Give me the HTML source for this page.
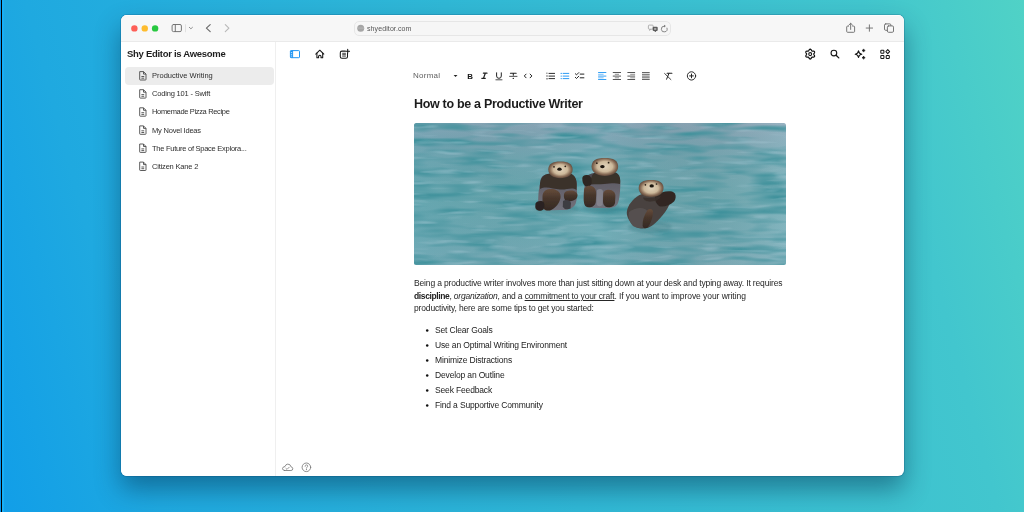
<!DOCTYPE html>
<html><head><meta charset="utf-8">
<style>
*{box-sizing:border-box;margin:0;padding:0}
html,body{width:1024px;height:512px;overflow:hidden}
body{position:relative;font-family:"Liberation Sans",sans-serif;background:linear-gradient(75deg,#119ee8 0%,#1fa9e0 14%,#30b8d6 50%,#42c6ce 86%,#50d2c6 100%)}
.a{position:absolute}
.t{position:absolute;white-space:nowrap;line-height:1;will-change:transform}
#edge0{left:0;top:0;width:1px;height:512px;background:#0896f0}
#edge1{left:1px;top:0;width:1px;height:512px;background:#000}
#edge2{left:2px;top:0;width:2px;height:512px;background:#1aaef5}
#win{left:121px;top:15px;width:783px;height:461px;border-radius:6px;background:#fff;overflow:hidden;
 box-shadow:0 0 0 1px rgba(0,50,100,.18),0 13px 26px rgba(0,40,70,.45)}
#tb{left:0;top:0;width:783px;height:27px;background:#f7f7f7;border-bottom:1px solid #eaeaea;box-shadow:inset 0 1px 0 #fdfdfd}
#side{left:0;top:27px;width:155px;height:434px;border-right:1px solid #efefef;background:#fff}
.si{font-size:7.5px;color:#2e2e2e}
.li{font-size:8.5px;letter-spacing:-0.155px;color:#222}
#svg{position:absolute;left:0;top:0;width:1024px;height:512px}
</style></head>
<body>
<div class="a" id="edge0"></div><div class="a" id="edge1"></div><div class="a" id="edge2"></div>
<div class="a" id="win">
  <div class="a" id="tb">
    <div class="a" style="left:233px;top:6px;width:317px;height:14.5px;border:1px solid #e6e6e6;border-radius:5px;background:#f6f6f6"></div>
  </div>
  <div class="a" id="side">
    <div class="a" style="left:4px;top:25px;width:148.5px;height:17.5px;border-radius:4px;background:#ececec"></div>
  </div>
</div>

<!-- texts -->
<div class="t" style="left:366.5px;top:24.7px;font-size:7px;letter-spacing:0.1px;color:#555">shyeditor.com</div>
<div class="t" style="left:127px;top:49px;font-size:9.5px;font-weight:bold;letter-spacing:-0.29px;color:#1e1e1e">Shy Editor is Awesome</div>
<div class="t si" style="left:152px;top:72.2px">Productive Writing</div>
<div class="t si" style="left:152px;top:90.3px;letter-spacing:-0.18px">Coding 101 - Swift</div>
<div class="t si" style="left:152px;top:108.4px;letter-spacing:-0.34px">Homemade Pizza Recipe</div>
<div class="t si" style="left:152px;top:126.5px;letter-spacing:-0.2px">My Novel Ideas</div>
<div class="t si" style="left:152px;top:144.6px;letter-spacing:-0.255px">The Future of Space Explora...</div>
<div class="t si" style="left:152px;top:162.7px;letter-spacing:-0.19px">Citizen Kane 2</div>

<div class="t" style="left:412.5px;top:72px;font-size:8px;letter-spacing:0.25px;color:#606060">Normal</div>
<div class="t" style="left:414px;top:98px;font-size:12.5px;font-weight:bold;letter-spacing:-0.31px;color:#1c1c1c">How to be a Productive Writer</div>

<div class="t" style="left:414px;top:276.9px;font-size:8.5px;letter-spacing:-0.155px;line-height:12.7px;color:#262626">Being a productive writer involves more than just sitting down at your desk and typing away. It requires<br><b style="color:#222;letter-spacing:-0.38px">discipline</b>, <i style="letter-spacing:-0.22px">organization</i>, and a <u>commitment to your craft</u>.<span style="letter-spacing:-0.06px"> If you want to improve your writing</span><br>productivity, here are some tips to get you started:</div>

<div class="t li" style="left:434.5px;top:326px">Set Clear Goals</div>
<div class="t li" style="left:434.5px;top:341px">Use an Optimal Writing Environment</div>
<div class="t li" style="left:434.5px;top:356px">Minimize Distractions</div>
<div class="t li" style="left:434.5px;top:371px">Develop an Outline</div>
<div class="t li" style="left:434.5px;top:386px">Seek Feedback</div>
<div class="t li" style="left:434.5px;top:401px">Find a Supportive Community</div>

<svg id="svg" viewBox="0 0 1024 512">
  <!-- IMAGE placeholder -->
  <g id="photo"><defs>
<clipPath id="pc"><rect x="414" y="123" width="372" height="142" rx="2.5"/></clipPath>
<linearGradient id="wg" x1="0" y1="0" x2="0" y2="1">
<stop offset="0" stop-color="#8eaabb"/><stop offset="0.1" stop-color="#80a8b7"/><stop offset="0.25" stop-color="#74aab5"/><stop offset="0.5" stop-color="#6cabb3"/><stop offset="0.8" stop-color="#72adb7"/><stop offset="1" stop-color="#7cafbb"/></linearGradient>
<linearGradient id="wg2" x1="0" y1="0" x2="1" y2="0">
<stop offset="0" stop-color="#3f8fa0" stop-opacity="0.15"/><stop offset="0.5" stop-color="#000" stop-opacity="0"/><stop offset="1" stop-color="#b8ccd6" stop-opacity="0.25"/></linearGradient>
<filter id="dk" x="0" y="0" width="1" height="1" color-interpolation-filters="sRGB">
  <feTurbulence type="fractalNoise" baseFrequency="0.02 0.13" numOctaves="2" seed="4"/>
  <feColorMatrix type="matrix" values="0 0 0 0 0.25  0 0 0 0 0.57  0 0 0 0 0.61  2.6 0 0 0 -1.1"/>
</filter>
<filter id="lt" x="0" y="0" width="1" height="1" color-interpolation-filters="sRGB">
  <feTurbulence type="fractalNoise" baseFrequency="0.03 0.2" numOctaves="2" seed="11"/>
  <feColorMatrix type="matrix" values="0 0 0 0 0.68  0 0 0 0 0.8  0 0 0 0 0.85  1.5 0 0 0 -0.85"/>
</filter>
<filter id="cr" x="0" y="0" width="1" height="1" color-interpolation-filters="sRGB">
  <feTurbulence type="turbulence" baseFrequency="0.018 0.16" numOctaves="1" seed="21"/>
  <feColorMatrix type="matrix" values="0 0 0 0 0.72  0 0 0 0 0.83  0 0 0 0 0.87  -4 0 0 0 0.45"/>
  <feGaussianBlur stdDeviation="0.5"/>
</filter>
<filter id="b1" x="-10%" y="-50%" width="120%" height="200%"><feGaussianBlur stdDeviation="0.6"/></filter>
<filter id="b2" x="-20%" y="-20%" width="140%" height="140%"><feGaussianBlur stdDeviation="0.6"/></filter>
<filter id="b3" x="-20%" y="-20%" width="140%" height="140%"><feGaussianBlur stdDeviation="1.6"/></filter>
</defs>
<g clip-path="url(#pc)">
<rect x="414" y="123" width="372" height="142" fill="url(#wg)"/>
<rect x="414" y="123" width="372" height="142" fill="url(#wg2)"/>
<g>
<rect x="414" y="123" width="372" height="142" filter="url(#dk)"/>
<rect x="414" y="123" width="372" height="142" filter="url(#lt)"/>
</g>
<defs>
<radialGradient id="face" cx="0.5" cy="0.48" r="0.58"><stop offset="0" stop-color="#e2d4bc"/><stop offset="0.5" stop-color="#cdb99b"/><stop offset="0.75" stop-color="#866a55"/><stop offset="1" stop-color="#45362d"/></radialGradient>
<linearGradient id="belly" x1="0" y1="0" x2="0" y2="1"><stop offset="0" stop-color="#444148"/><stop offset="0.35" stop-color="#625f68"/><stop offset="1" stop-color="#72727c"/></linearGradient>
<linearGradient id="foot" x1="0" y1="0" x2="0" y2="1"><stop offset="0" stop-color="#664c3b"/><stop offset="0.45" stop-color="#47362b"/><stop offset="1" stop-color="#342923"/></linearGradient>
</defs>
<g filter="url(#b2)">
<ellipse cx="557" cy="209" rx="22" ry="5" fill="#3f7f88" opacity="0.4" filter="url(#b3)"/>
<ellipse cx="601" cy="207" rx="19" ry="5" fill="#3f7f88" opacity="0.4" filter="url(#b3)"/>
<ellipse cx="650" cy="227" rx="22" ry="6" fill="#3f7f88" opacity="0.4" filter="url(#b3)"/>
<!-- otter 1 -->
<path d="M540.5 183 C540 176 545 173.5 551 174 L569 174 C575 175 577.5 180 576.8 188 C577.5 195 577 200 575.5 204 C573 209 567 210.5 560 210 L546 210.5 C540 209 537.5 204 538.3 197 C538.5 192 539 187 540.5 183 Z" fill="url(#belly)"/>
<path d="M540 189 C539 179 543 174 550 173.5 L570 173.5 C576 175 577.5 181 576.5 190 C572 186.5 567 190 560 189.5 C553 189 546 185.5 540 189 Z" fill="#3a312c"/>
<path d="M548.3 169.5 C548.3 164 552.5 161.5 560.4 161.5 C568.3 161.5 572.6 164 572.6 169.5 C572.6 175 567.5 178.2 560.4 178.2 C553.3 178.2 548.3 175 548.3 169.5 Z" fill="url(#face)"/>
<ellipse cx="559.5" cy="169.2" rx="2.2" ry="1.6" fill="#1b1511"/>
<circle cx="554" cy="166.8" r="0.9" fill="#2a2018"/><circle cx="565.3" cy="166.3" r="0.9" fill="#2a2018"/>
<path d="M542.5 196 C543 190 548 188.5 552.5 189 C557.5 189.5 561.5 193 560.5 198 C559.5 203 556 208 550 210.5 C545 211 542 209 542.5 203 Z" fill="url(#foot)"/>
<path d="M535.5 203.5 C537.5 200.5 542 200.5 544 202.5 C545 206 544.5 210 541 210.8 C537 211 535 209 535.3 206 Z" fill="#2b2420"/>
<path d="M564 194 C565 190.5 570 190 574 191 C578 192.5 578.5 196 576 199 C573 201.5 569 201.5 566 201 C564 199.5 563.7 197 564 194 Z" fill="url(#foot)"/>
<path d="M563 201 C566 199 570 200 571 203 L570.5 208.5 C567.5 210 564 209.5 562.8 206.5 Z" fill="#3e3c42"/>
<!-- otter 2 -->
<path d="M585 184 C584.5 177 588 174 594 173 L613 172.5 C619 173.5 621 178 620.3 186 C620 193 619.5 199 618 203 C616 208 610 208.5 603 208 L590 207.8 C585 206.5 583 202 583.6 195 C583.8 191 584.2 187 585 184 Z" fill="url(#belly)"/>
<path d="M591 184.5 C590 176 593 172.5 598 172 L613 172 C619 172.5 621 177 620 184 C614 182.5 609 184 604 184 C599 184.5 595 184 591 184.5 Z" fill="#39302b"/>
<path d="M582.3 178 C582.5 175 586 174.5 588.5 175.3 C591.5 176.5 592 180 591.5 183.5 C590.5 186.8 587 187.3 585 186 C582.8 184 582.2 181 582.3 178 Z" fill="#2e2621"/>
<path d="M591.6 166.5 C591.6 160.5 596 158 604.8 158 C613.6 158 618.1 160.5 618.1 166.5 C618.1 172.5 612.6 175.9 604.8 175.9 C597 175.9 591.6 172.5 591.6 166.5 Z" fill="url(#face)"/>
<ellipse cx="602.4" cy="166.6" rx="2.3" ry="1.7" fill="#1b1511"/>
<circle cx="596.8" cy="163.2" r="0.9" fill="#2a2018"/><circle cx="608.6" cy="162.7" r="0.9" fill="#2a2018"/>
<path d="M584 191 C584 187 587 185.6 590 185.7 C594 186 596.3 189 596.2 194 L595.8 202 C595 206 592 207.5 588 207.3 C585 207 583.8 204 583.8 200 Z" fill="url(#foot)"/>
<path d="M603.2 194 C603.3 191 606 189.6 609 189.7 C613 190 615.4 192.5 615.4 196 L615 203 C614.3 206.5 611 207.5 608 207.3 C604.5 207 603 204.5 603 201 Z" fill="url(#foot)"/>
<path d="M597 190 C600 188 603 189 603 192 L602.5 205 C600 207 597.5 206.5 596.5 204 Z" fill="#8d8c95" opacity="0.7"/>
<!-- otter 3 -->
<path d="M639.5 195 C646 192 655 191.5 663 193 C669 194.5 671 198 670 203 C667 211 660 219 653 225 C648 229 641 229.5 636 227 C630 223.5 626.5 217 626.8 212 C627.5 205 633 199 639.5 195 Z" fill="#48423f"/>
<path d="M629 212 C634 208 641 207 645 209 C650 212 650 220 647 225 C643 229 637 228.5 633 226 C629.5 222.5 627.8 217 629 212 Z" fill="#55504f"/>
<path d="M655 196 C660 192 667 190.5 672 191.5 C676.5 193 676.5 198 674 201.5 C670 205.5 664.5 207 660 206.5 C656.5 205 654.5 200 655 196 Z" fill="#302824"/>
<path d="M638.7 188 C638.7 182.5 643 180 651.1 180 C659.2 180 663.5 182.5 663.5 188 C663.5 193.8 658.5 197 651.1 197 C643.7 197 638.7 193.8 638.7 188 Z" fill="url(#face)"/>
<ellipse cx="651.7" cy="185.9" rx="2.2" ry="1.6" fill="#1b1511"/>
<circle cx="645.4" cy="184.8" r="0.85" fill="#2a2018"/><circle cx="656.5" cy="184" r="0.85" fill="#2a2018"/>
<path d="M643 197.5 C648 198.5 655 198 661 196 C659 200.5 654 201.5 649 201.5 C645.5 201.2 643.5 200 643 197.5 Z" fill="#3a302b" opacity="0.85"/>
<path d="M647.5 210 C650 208 653 209 653 212 C652.8 217 651 223 648 227.3 C646 229 643.3 228.5 642.6 226 C642.3 221 644 215 647.5 210 Z" fill="url(#foot)"/>
</g>
</g></g>
  <!-- traffic lights -->
  <circle cx="134.4" cy="28.4" r="3.2" fill="#fe5f57"/>
  <circle cx="144.75" cy="28.4" r="3.2" fill="#febc2e"/>
  <circle cx="155.1" cy="28.4" r="3.2" fill="#28c840"/>
  <g fill="none" stroke="#707070" stroke-width="0.95" stroke-linecap="round" stroke-linejoin="round">
    <rect x="172.1" y="24.5" width="9.3" height="7.1" rx="1.4"/>
    <line x1="175.3" y1="24.5" x2="175.3" y2="31.6"/>
    <polyline points="189.3,27.3 190.9,28.8 192.5,27.3" stroke="#808080" stroke-width="0.85"/>
    <polyline points="210.2,24.7 206.4,28.2 210.2,31.7" stroke="#6a6a6a" stroke-width="1.15"/>
    <polyline points="225.3,24.7 228.9,28.2 225.3,31.7" stroke="#b9b9b9" stroke-width="1.15"/>
    <path d="M848.6 26.1 H847.6 Q846.7 26.1 846.7 27 V31.4 Q846.7 32.3 847.6 32.3 H853.7 Q854.6 32.3 854.6 31.4 V27 Q854.6 26.1 853.7 26.1 H852.7"/>
    <path d="M850.65 29.4 V23.4 M848.8 25.1 L850.65 23.3 L852.5 25.1"/>
    <path d="M866.2 28.05 H872.6 M869.4 24.85 V31.25" stroke="#727272"/>
    <rect x="884.5" y="23.9" width="6.4" height="6.4" rx="1.2"/>
    <rect x="887.4" y="25.9" width="6.1" height="6.4" rx="1.2" fill="#f7f7f7"/>
    <path d="M664.2 26.1 A2.9 2.9 0 1 0 667 28.1" stroke="#7a7a7a" stroke-width="0.9"/>
    <path d="M664 24.7 L665.9 26.1 L664 27.5 Z" fill="#7a7a7a" stroke="none"/>
  </g>
  <g stroke="#dadada" stroke-width="0.8"><line x1="185.5" y1="24.3" x2="185.5" y2="32.2"/></g>
  <g fill="#999">
    <circle cx="360.7" cy="28.15" r="3.5" fill="#a5a5a5"/>
    <path d="M357.4 28.1 H364" stroke="#c8c8c8" stroke-width="0.5"/>
  </g>
  <g>
    <rect x="648.4" y="25.1" width="4.8" height="4.1" rx="0.9" fill="none" stroke="#a0a0a0" stroke-width="0.8"/>
    <path d="M649.6 29.2 V30.5 L650.9 29.2" fill="none" stroke="#a0a0a0" stroke-width="0.7"/>
    <rect x="652.7" y="26.7" width="5" height="4.4" rx="1.1" fill="#5a5a5a"/>
    <path d="M655.6 31 V32 L654.6 31" fill="#5a5a5a" stroke="#5a5a5a" stroke-width="0.6"/>
    <rect x="654.1" y="27.9" width="2.2" height="2" fill="#aaa"/>
  </g>

  <!-- main top row -->
  <g fill="none" stroke="#2196f3" stroke-width="1">
    <rect x="290.4" y="50.6" width="9.1" height="7.1" rx="0.7"/>
    <line x1="292.6" y1="50.6" x2="292.6" y2="57.7"/>
  </g>
  <g fill="#2196f3"><rect x="290.4" y="50.6" width="2.2" height="7.1"/></g>
  <g fill="#d8ecfd"><rect x="290.9" y="52.1" width="1.2" height="0.8"/><rect x="290.9" y="53.9" width="1.2" height="0.8"/><rect x="290.9" y="55.7" width="1.2" height="0.8"/></g>
  <g fill="none" stroke="#161616" stroke-width="1.05" stroke-linecap="round" stroke-linejoin="round">
    <path d="M315.8 54.1 L319.8 50.2 L323.8 54.1"/>
    <path d="M316.9 53.1 V57.8 H318.6 V56 Q319.8 54.6 321 56 V57.8 H322.7 V53.1"/>
    <path d="M345.3 51.1 H341.9 Q340.3 51.1 340.3 52.7 V56.7 Q340.3 58.3 341.9 58.3 H345.9 Q347.5 58.3 347.5 56.7 V53.3"/>
    <path d="M347.7 49.3 V53 M345.85 51.15 H349.55" stroke-width="1.05"/>
    <path d="M342.6 53.3 H345.5 M342.6 54.7 H345.5 M342.6 56.1 H345.5" stroke-width="0.8"/>
    <path d="M813.75 54.10 L813.80 54.34 L813.92 54.59 L814.11 54.88 L814.31 55.20 L814.48 55.55 L814.58 55.92 L814.59 56.27 L814.49 56.58 L814.27 56.82 L813.96 56.99 L813.60 57.08 L813.21 57.11 L812.83 57.09 L812.49 57.08 L812.20 57.10 L811.98 57.17 L811.79 57.33 L811.64 57.57 L811.48 57.87 L811.30 58.21 L811.08 58.53 L810.82 58.80 L810.52 58.99 L810.20 59.05 L809.88 58.99 L809.58 58.80 L809.32 58.53 L809.10 58.21 L808.92 57.87 L808.76 57.57 L808.61 57.33 L808.43 57.17 L808.20 57.10 L807.91 57.08 L807.57 57.09 L807.19 57.11 L806.80 57.08 L806.44 56.99 L806.13 56.82 L805.91 56.58 L805.81 56.27 L805.82 55.92 L805.92 55.55 L806.09 55.20 L806.29 54.88 L806.48 54.59 L806.60 54.34 L806.65 54.10 L806.60 53.86 L806.48 53.61 L806.29 53.32 L806.09 53.00 L805.92 52.65 L805.82 52.28 L805.81 51.93 L805.91 51.62 L806.13 51.38 L806.44 51.21 L806.80 51.12 L807.19 51.09 L807.57 51.11 L807.91 51.12 L808.20 51.10 L808.43 51.03 L808.61 50.87 L808.76 50.63 L808.92 50.33 L809.10 49.99 L809.32 49.67 L809.58 49.40 L809.88 49.21 L810.20 49.15 L810.52 49.21 L810.82 49.40 L811.08 49.67 L811.30 49.99 L811.48 50.33 L811.64 50.63 L811.79 50.87 L811.98 51.03 L812.20 51.10 L812.49 51.12 L812.83 51.11 L813.21 51.09 L813.60 51.12 L813.96 51.21 L814.27 51.38 L814.49 51.62 L814.59 51.93 L814.58 52.28 L814.48 52.65 L814.31 53.00 L814.11 53.32 L813.92 53.61 L813.80 53.86Z" stroke-width="1.2" stroke="#111"/>
    <circle cx="810.2" cy="54.1" r="1.5" stroke-width="1.05"/>
    <circle cx="833.9" cy="53.05" r="2.85" stroke-width="1.1"/>
    <path d="M836.1 55.3 L838.8 57.9" stroke-width="1.3"/>
    <path d="M858.5 50.9 Q858.9 53.8 861.8 54.2 Q858.9 54.6 858.5 57.5 Q858.1 54.6 855.2 54.2 Q858.1 53.8 858.5 50.9 Z" stroke-width="1.15"/>
    <rect x="880.8" y="50.2" width="3.1" height="3.1" rx="0.7"/>
    <path d="M887.75 49.6 L889.6 51.6 L887.75 53.6 L885.9 51.6 Z"/>
    <rect x="880.8" y="55.4" width="3.1" height="3.1" rx="0.7"/>
    <rect x="886.2" y="55.4" width="3.1" height="3.1" rx="0.7"/>
  </g>
  <g fill="#161616">
    <path d="M863.6 48.9 Q863.9 50.2 865.2 50.5 Q863.9 50.8 863.6 52.1 Q863.3 50.8 862 50.5 Q863.3 50.2 863.6 48.9 Z" stroke="#161616" stroke-width="0.6"/>
    <path d="M863.6 56.1 Q863.9 57.4 865.2 57.7 Q863.9 58 863.6 59.3 Q863.3 58 862 57.7 Q863.3 57.4 863.6 56.1 Z" stroke="#161616" stroke-width="0.6"/>
  </g>

  <!-- toolbar -->
  <polygon points="453.6,75.1 457.5,75.1 455.55,77.1" fill="#222"/>
  <text x="467.2" y="78.5" font-family="Liberation Sans" font-weight="bold" font-size="7.9" fill="#161616">B</text>
  <g fill="none" stroke="#222" stroke-width="1" stroke-linecap="round" stroke-linejoin="round">
    <path d="M483.4 73.2 H487 M481.8 78.3 H485.3 M485.3 73.2 L483.5 78.3" stroke-width="1.2"/>
    <path d="M496.6 72.8 V76 Q496.6 78.3 498.95 78.3 Q501.3 78.3 501.3 76 V72.8"/>
    <path d="M495.9 79.8 H502" stroke-width="0.8"/>
    <path d="M510.4 73.3 H516.2 M513.3 73.3 V75.3" stroke-width="1.05"/>
    <path d="M509.6 76.35 H517" stroke-width="0.8"/>
    <polyline points="526.1,74.1 524.3,75.95 526.1,77.8"/>
    <polyline points="530.1,74.1 531.9,75.95 530.1,77.8"/>
    <path d="M549 73.4 H554.6 M549 76.1 H554.6 M549 78.6 H554.6" stroke-width="0.95"/>
    <path d="M575.3 73.7 L576.5 74.9 L578.8 72.6 M575.3 77.3 L576.5 78.5 L578.8 76.2" stroke-width="0.95"/>
    <path d="M580.2 74.1 H583.9 M580.2 77.8 H583.9" stroke-width="1"/>
    <path d="M667.1 73.25 H671.9" stroke-width="1.1"/>
    <path d="M669 73.3 L666.6 79.2" stroke-width="1"/>
    <path d="M664.6 73.5 L670.9 79.6" stroke-width="0.85"/>
    <circle cx="691.5" cy="75.9" r="4.15" stroke-width="0.95"/>
    <path d="M689.6 75.9 H693.4 M691.5 74 V77.8" stroke-width="1"/>
  </g>
  <g fill="#222">
    <circle cx="513.3" cy="78.4" r="0.7"/>
    <path d="M546.4 72.4 h1 v1.6 h-1z M546.3 75.3 h1.4 v1.5 h-1.4z M546.3 78 h1.4 v1.5 h-1.4z" fill="#777"/>
    <circle cx="427.2" cy="330.6" r="1.25" fill="#111"/><circle cx="427.2" cy="345.6" r="1.25" fill="#111"/><circle cx="427.2" cy="360.6" r="1.25" fill="#111"/><circle cx="427.2" cy="375.6" r="1.25" fill="#111"/><circle cx="427.2" cy="390.6" r="1.25" fill="#111"/><circle cx="427.2" cy="405.6" r="1.25" fill="#111"/>
  </g>
  <g fill="none" stroke="#2196f3" stroke-width="0.95">
    <path d="M562.7 73.4 H569.2 M562.7 76.1 H569.2 M562.7 78.6 H569.2"/>
    <path d="M598.1 72.5 H606.3 M598.1 76.1 H606.3 M598.1 79.5 H606.3" stroke-width="0.9"/>
    <path d="M598.1 74.3 H603.6 M598.1 77.8 H603.6" stroke-width="0.8" opacity="0.75"/>
  </g>
  <g fill="#2196f3"><circle cx="561.2" cy="73.4" r="0.65"/><circle cx="561.2" cy="76.1" r="0.65"/><circle cx="561.2" cy="78.6" r="0.65"/></g>
  <g fill="none" stroke="#444" stroke-width="0.9">
    <path d="M612.8 72.5 H621 M612.8 76.1 H621 M612.8 79.5 H621"/>
    <path d="M614.8 74.3 H619 M614.8 77.8 H619" stroke-width="0.8" opacity="0.75"/>
    <path d="M627.4 72.5 H635.1 M627.4 76.1 H635.1 M627.4 79.5 H635.1"/>
    <path d="M630.2 74.3 H635.1 M630.2 77.8 H635.1" stroke-width="0.8" opacity="0.75"/>
    <path d="M642 72.5 H649.7 M642 74.3 H649.7 M642 76.1 H649.7 M642 77.8 H649.7 M642 79.5 H649.7" stroke="#555"/>
  </g>

  <!-- sidebar file icons -->
  <g fill="none" stroke="#4a4a4a" stroke-width="0.9" stroke-linejoin="round"><path d="M139.7 71.60 H143.5 L146 74.10 V79.40 Q146 80.00 145.4 80.00 H140.3 Q139.7 80.00 139.7 79.40 Z M143.5 71.60 V74.10 H146 M141.4 76.50 H144.2 M141.4 78.20 H144.2"/><path d="M139.7 89.70 H143.5 L146 92.20 V97.50 Q146 98.10 145.4 98.10 H140.3 Q139.7 98.10 139.7 97.50 Z M143.5 89.70 V92.20 H146 M141.4 94.60 H144.2 M141.4 96.30 H144.2"/><path d="M139.7 107.80 H143.5 L146 110.30 V115.60 Q146 116.20 145.4 116.20 H140.3 Q139.7 116.20 139.7 115.60 Z M143.5 107.80 V110.30 H146 M141.4 112.70 H144.2 M141.4 114.40 H144.2"/><path d="M139.7 125.90 H143.5 L146 128.40 V133.70 Q146 134.30 145.4 134.30 H140.3 Q139.7 134.30 139.7 133.70 Z M143.5 125.90 V128.40 H146 M141.4 130.80 H144.2 M141.4 132.50 H144.2"/><path d="M139.7 144.00 H143.5 L146 146.50 V151.80 Q146 152.40 145.4 152.40 H140.3 Q139.7 152.40 139.7 151.80 Z M143.5 144.00 V146.50 H146 M141.4 148.90 H144.2 M141.4 150.60 H144.2"/><path d="M139.7 162.10 H143.5 L146 164.60 V169.90 Q146 170.50 145.4 170.50 H140.3 Q139.7 170.50 139.7 169.90 Z M143.5 162.10 V164.60 H146 M141.4 167.00 H144.2 M141.4 168.70 H144.2"/></g>

  <!-- bottom icons -->
  <g fill="none" stroke="#7a7a7a" stroke-width="0.85" stroke-linecap="round" stroke-linejoin="round">
    <path d="M284.6 470.5 H290.9 Q292.8 470.5 292.8 468.8 Q292.8 467.1 291.1 466.9 Q290.5 464.1 287.8 464.1 Q285.6 464.2 285 466.5 Q282.5 466.8 282.5 468.6 Q282.6 470.5 284.6 470.5 Z"/>
    <path d="M285.9 468.4 L287 469.4 L289.2 467.2" stroke-width="0.8"/>
    <circle cx="306.4" cy="467.3" r="4.3"/>
    <path d="M305.15 466.3 C305.15 465.4 305.7 464.9 306.45 464.9 C307.2 464.9 307.75 465.4 307.75 466.05 C307.75 466.9 306.5 467.1 306.45 468.2" stroke-width="0.8"/>
  </g>
  <circle cx="306.45" cy="469.6" r="0.55" fill="#7a7a7a"/>
</svg>
</body></html>
